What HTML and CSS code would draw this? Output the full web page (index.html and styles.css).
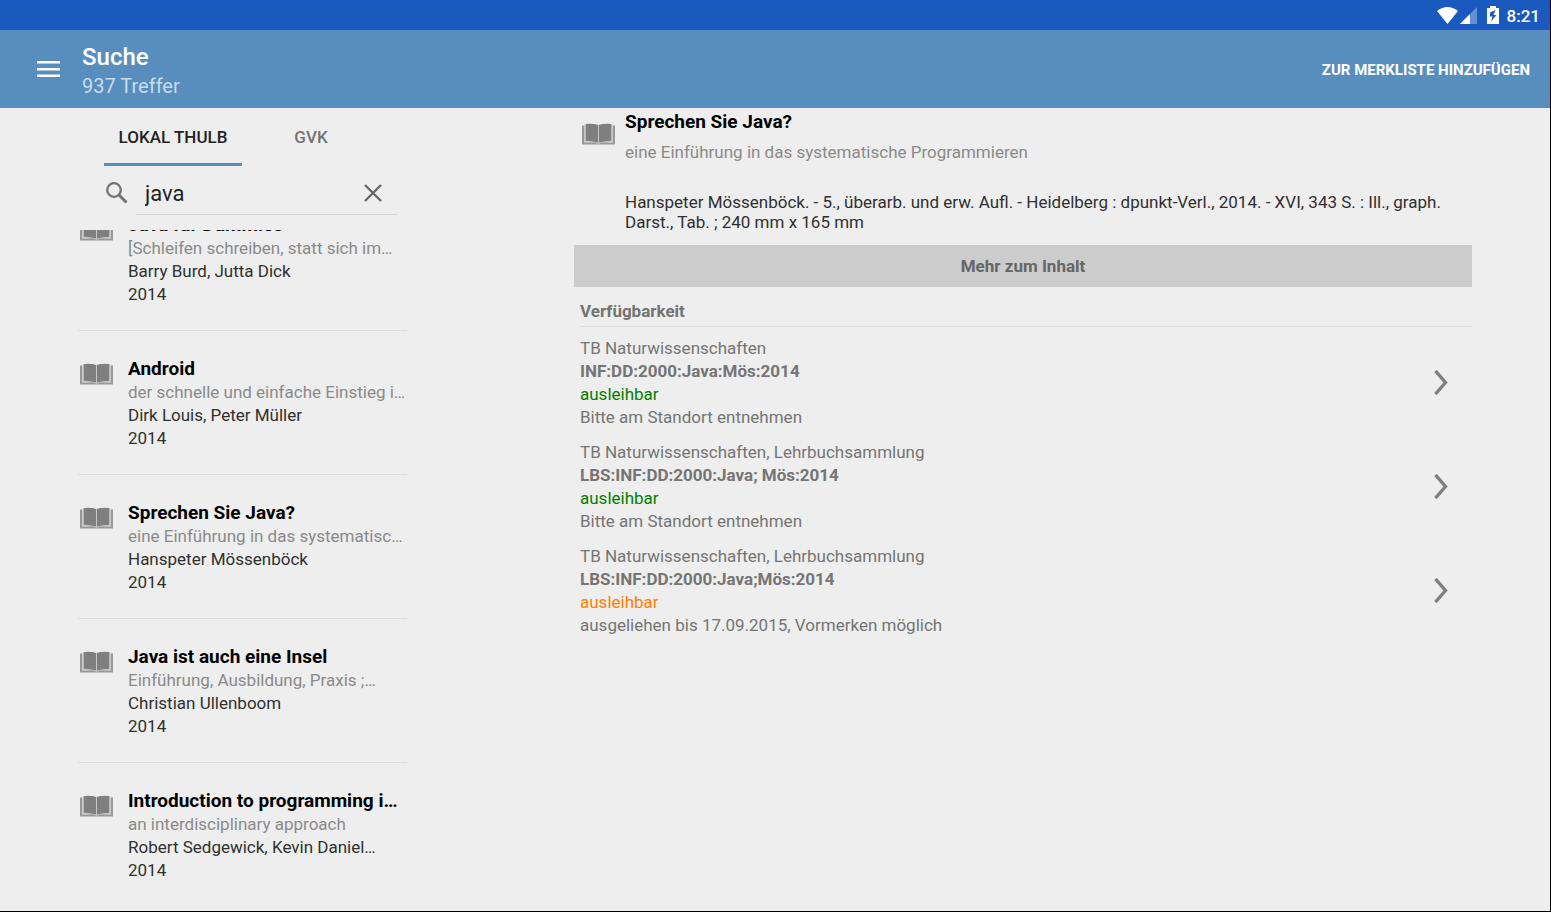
FILE: index.html
```html
<!DOCTYPE html>
<html lang="de">
<head>
<meta charset="utf-8">
<meta name="viewport" content="width=device-width, initial-scale=1">
<title>Suche</title>
<link rel="stylesheet" href="styles.css">
</head>
<body>
<svg class="sprite" aria-hidden="true">
  <symbol id="book" viewBox="0 0 33 22">
    <path fill="#989898" d="M0 2.500H2V19.500L14 18.500L16.500 19.500L19 18.500L31 19.500V2.500H33V21.500H0z"/>
    <path fill="#c8c8c8" d="M2 1.500H31V19.800L20 19.500L16.500 21L13 19.500L2 19.800z"/>
    <path fill="#eee" d="M2 0H31V1.500Q23-.5 16.500 1.500Q10-.5 2 1.500z"/>
    <path fill="#7f7f7f" d="M3.800 1Q11 .2 16 2V19.500Q10 18 3.800 17.800zM17 2Q22 .2 29.200 1V17.800Q23 18 17 19.500z"/>
  </symbol>
  <symbol id="chevron" viewBox="0 0 14 26">
    <path fill="none" stroke="#7f7f7f" stroke-width="3.400" d="M1.500 1L11.500 12.500L1.500 24"/>
  </symbol>
</svg>
<div class="screen">
  <div class="status">
    <svg class="wifi" viewBox="0 0 21 17"><path fill="#fff" d="M0 4Q10.500-4 21 4L10.500 17z"/></svg>
    <svg class="signal" viewBox="0 0 17 17"><path fill="#fff" fill-opacity=".32" d="M17 0V17H0z"/><path fill="#fff" d="M10 7V17H0z"/></svg>
    <svg class="battery" viewBox="0 0 12 18"><path fill="#fff" d="M3 0h6v2h3v16H0V2h3z"/><path fill="#1a5abf" d="M8.500 4L3 6.500V10.500H5.500L4 15.500L9.500 9H6.500z"/></svg>
    <span class="clock">8:21</span>
  </div>
  <header class="appbar">
    <button class="menu" type="button" aria-label="Menü">
      <svg viewBox="0 0 23 17"><path fill="#fff" d="M0 0h23v2.500H0zM0 7h23v2.500H0zM0 13.500h23v2.500H0z"/></svg>
    </button>
    <div class="heading">
      <h1>Suche</h1>
      <p>937 Treffer</p>
    </div>
    <button class="action" type="button">ZUR MERKLISTE HINZUFÜGEN</button>
  </header>
  <main class="panes">
    <section class="results">
      <div class="tabs" role="tablist">
        <button class="tab active" type="button" role="tab" aria-selected="true">LOKAL THULB</button>
        <button class="tab" type="button" role="tab" aria-selected="false">GVK</button>
      </div>
      <div class="search">
        <svg class="lens" viewBox="0 0 22 22"><circle cx="8" cy="8" r="6.800" fill="none" stroke="#737373" stroke-width="2.300"/><path d="M13 13L20.500 20.500" stroke="#737373" stroke-width="3"/></svg>
        <div class="field">
          <input type="text" value="java" aria-label="Suchbegriff">
          <button class="clear" type="button" aria-label="Löschen"><svg viewBox="0 0 18 18"><path d="M1 1L17 17M17 1L1 17" stroke="#666" stroke-width="2.300"/></svg></button>
        </div>
      </div>
      <div class="viewport">
        <ul class="list">
          <li class="item"><svg class="book"><use href="#book"/></svg><div class="text"><h2>Java für Dummies</h2><p class="sub">[Schleifen schreiben, statt sich im…</p><p>Barry Burd, Jutta Dick</p><p>2014</p></div></li>
          <li class="item"><svg class="book"><use href="#book"/></svg><div class="text"><h2>Android</h2><p class="sub">der schnelle und einfache Einstieg i…</p><p>Dirk Louis, Peter Müller</p><p>2014</p></div></li>
          <li class="item"><svg class="book"><use href="#book"/></svg><div class="text"><h2>Sprechen Sie Java?</h2><p class="sub">eine Einführung in das systematisc…</p><p>Hanspeter Mössenböck</p><p>2014</p></div></li>
          <li class="item"><svg class="book"><use href="#book"/></svg><div class="text"><h2>Java ist auch eine Insel</h2><p class="sub">Einführung, Ausbildung, Praxis ;…</p><p>Christian Ullenboom</p><p>2014</p></div></li>
          <li class="item"><svg class="book"><use href="#book"/></svg><div class="text"><h2>Introduction to programming i…</h2><p class="sub">an interdisciplinary approach</p><p>Robert Sedgewick, Kevin Daniel…</p><p>2014</p></div></li>
        </ul>
      </div>
    </section>
    <section class="detail">
      <div class="record">
        <svg class="book"><use href="#book"/></svg>
        <div class="text">
          <h2>Sprechen Sie Java?</h2>
          <p class="sub">eine Einführung in das systematische Programmieren</p>
          <p class="imprint">Hanspeter Mössenböck. - 5., überarb. und erw. Aufl. - Heidelberg : dpunkt-Verl., 2014. - XVI, 343 S. : Ill., graph. Darst., Tab. ; 240 mm x 165 mm</p>
        </div>
      </div>
      <button class="more" type="button">Mehr zum Inhalt</button>
      <h3>Verfügbarkeit</h3>
      <ul class="copies">
        <li><div><p>TB Naturwissenschaften</p><p class="mark">INF:DD:2000:Java:Mös:2014</p><p class="free">ausleihbar</p><p>Bitte am Standort entnehmen</p></div><svg class="chevron"><use href="#chevron"/></svg></li>
        <li><div><p>TB Naturwissenschaften, Lehrbuchsammlung</p><p class="mark">LBS:INF:DD:2000:Java; Mös:2014</p><p class="free">ausleihbar</p><p>Bitte am Standort entnehmen</p></div><svg class="chevron"><use href="#chevron"/></svg></li>
        <li><div><p>TB Naturwissenschaften, Lehrbuchsammlung</p><p class="mark">LBS:INF:DD:2000:Java;Mös:2014</p><p class="lent">ausleihbar</p><p>ausgeliehen bis 17.09.2015, Vormerken möglich</p></div><svg class="chevron"><use href="#chevron"/></svg></li>
      </ul>
    </section>
  </main>
</div>
</body>
</html>
```
FILE: styles.css
```css
* { box-sizing: border-box; }
body { margin: 0; font: 17px/23px Roboto, sans-serif; color: #303030; }
h1, h2, h3, p, ul { margin: 0; padding: 0; }
ul { list-style: none; }
button { border: 0; padding: 0; background: none; font: inherit; color: inherit; cursor: pointer; }
svg { display: block; flex: none; }
.sprite { position: absolute; width: 0; height: 0; }

.screen { display: flex; flex-direction: column; min-height: 100vh; background: #eee; border-right: 1px solid #000; border-bottom: 1px solid #000; }

.status { display: flex; align-items: center; justify-content: flex-end; height: 30px; padding-right: 10px; background: #1a5abf; color: #fff; }
.wifi { width: 21px; height: 17px; }
.signal { width: 17px; height: 17px; margin-left: 2px; }
.battery { width: 12px; height: 18px; margin-left: 10px; }
.clock { margin-left: 8px; font-weight: 500; padding-top: 2px; }

.appbar { display: flex; align-items: center; height: 78px; padding: 0 20px 0 37px; background: #588ebe; color: #fff; }
.menu svg { width: 23px; height: 17px; }
.heading { flex: 1; margin-left: 22px; padding-top: 4px; }
.heading h1 { font-size: 24px; line-height: 30px; font-weight: 500; }
.heading p { font-size: 20px; line-height: 28px; color: #c8dcec; }
.action { font-size: 15px; font-weight: 700; padding-top: 2px; }

.panes { flex: 1; display: flex; }
.results { flex: none; width: 329px; margin-left: 78px; display: flex; flex-direction: column; }
.tabs { display: flex; margin-left: 26px; }
.tab { width: 138px; height: 58px; padding-top: 4px; border-bottom: 3px solid transparent; font-weight: 500; color: #737373; }
.tab.active { color: #222; border-color: #588ebe; }
.search { display: flex; align-items: center; height: 49px; margin: 0 10px 0 28px; }
.lens { width: 22px; height: 22px; margin-top: 5px; }
.field { flex: 1; min-width: 0; display: flex; align-items: center; height: 43px; margin: 6px 0 0 8px; padding: 0 15px 0 9px; border-bottom: 1px solid #d4d4d4; }
.field input { flex: 1; min-width: 0; border: 0; padding: 2px 0 0; background: none; outline: 0; font: 22px/30px Roboto, sans-serif; color: #222; }
.clear svg { width: 18px; height: 18px; }

.viewport { flex: 1; overflow: hidden; margin-top: 15px; }
.list { margin-top: -43px; }
.item { display: flex; padding: 26px 0 23px 2px; border-bottom: 1px solid #dedede; }
.item:last-child { border-color: transparent; }
.book { width: 33px; height: 22px; }
.item .book { margin: 6px 15px 0 0; }
.text { min-width: 0; }
.item .text { white-space: nowrap; }
.text h2 { font-size: 19px; line-height: 24px; font-weight: 700; color: #000; }
.item .sub { line-height: 23px; }
.item .text { padding-bottom: 1px; }
.sub { color: #8a8a8a; }

.detail { flex: 1; margin: 0 78px 0 167px; }
.record { display: flex; padding: 2px 8px 0 8px; }
.record .book { margin: 13px 10px 0 0; }
.record .sub { margin-top: 7px; }
.imprint { margin-top: 28px; line-height: 20px; }
.more { display: block; width: 100%; height: 42px; margin-top: 13px; background: #ccc; color: #666; font-weight: 700; }
.detail h3 { margin: 13px 0 0 6px; padding-bottom: 3px; border-bottom: 1px solid #dedede; font-size: 17px; line-height: 23px; color: #737373; }
.copies { display: grid; gap: 12px; margin: 10px 24px 0 6px; color: #757575; }
.copies li { display: flex; justify-content: space-between; align-items: center; }
.chevron { width: 14px; height: 26px; }
.mark { font-weight: 700; }
.free { color: #008000; }
.lent { color: #ff8000; }
```
